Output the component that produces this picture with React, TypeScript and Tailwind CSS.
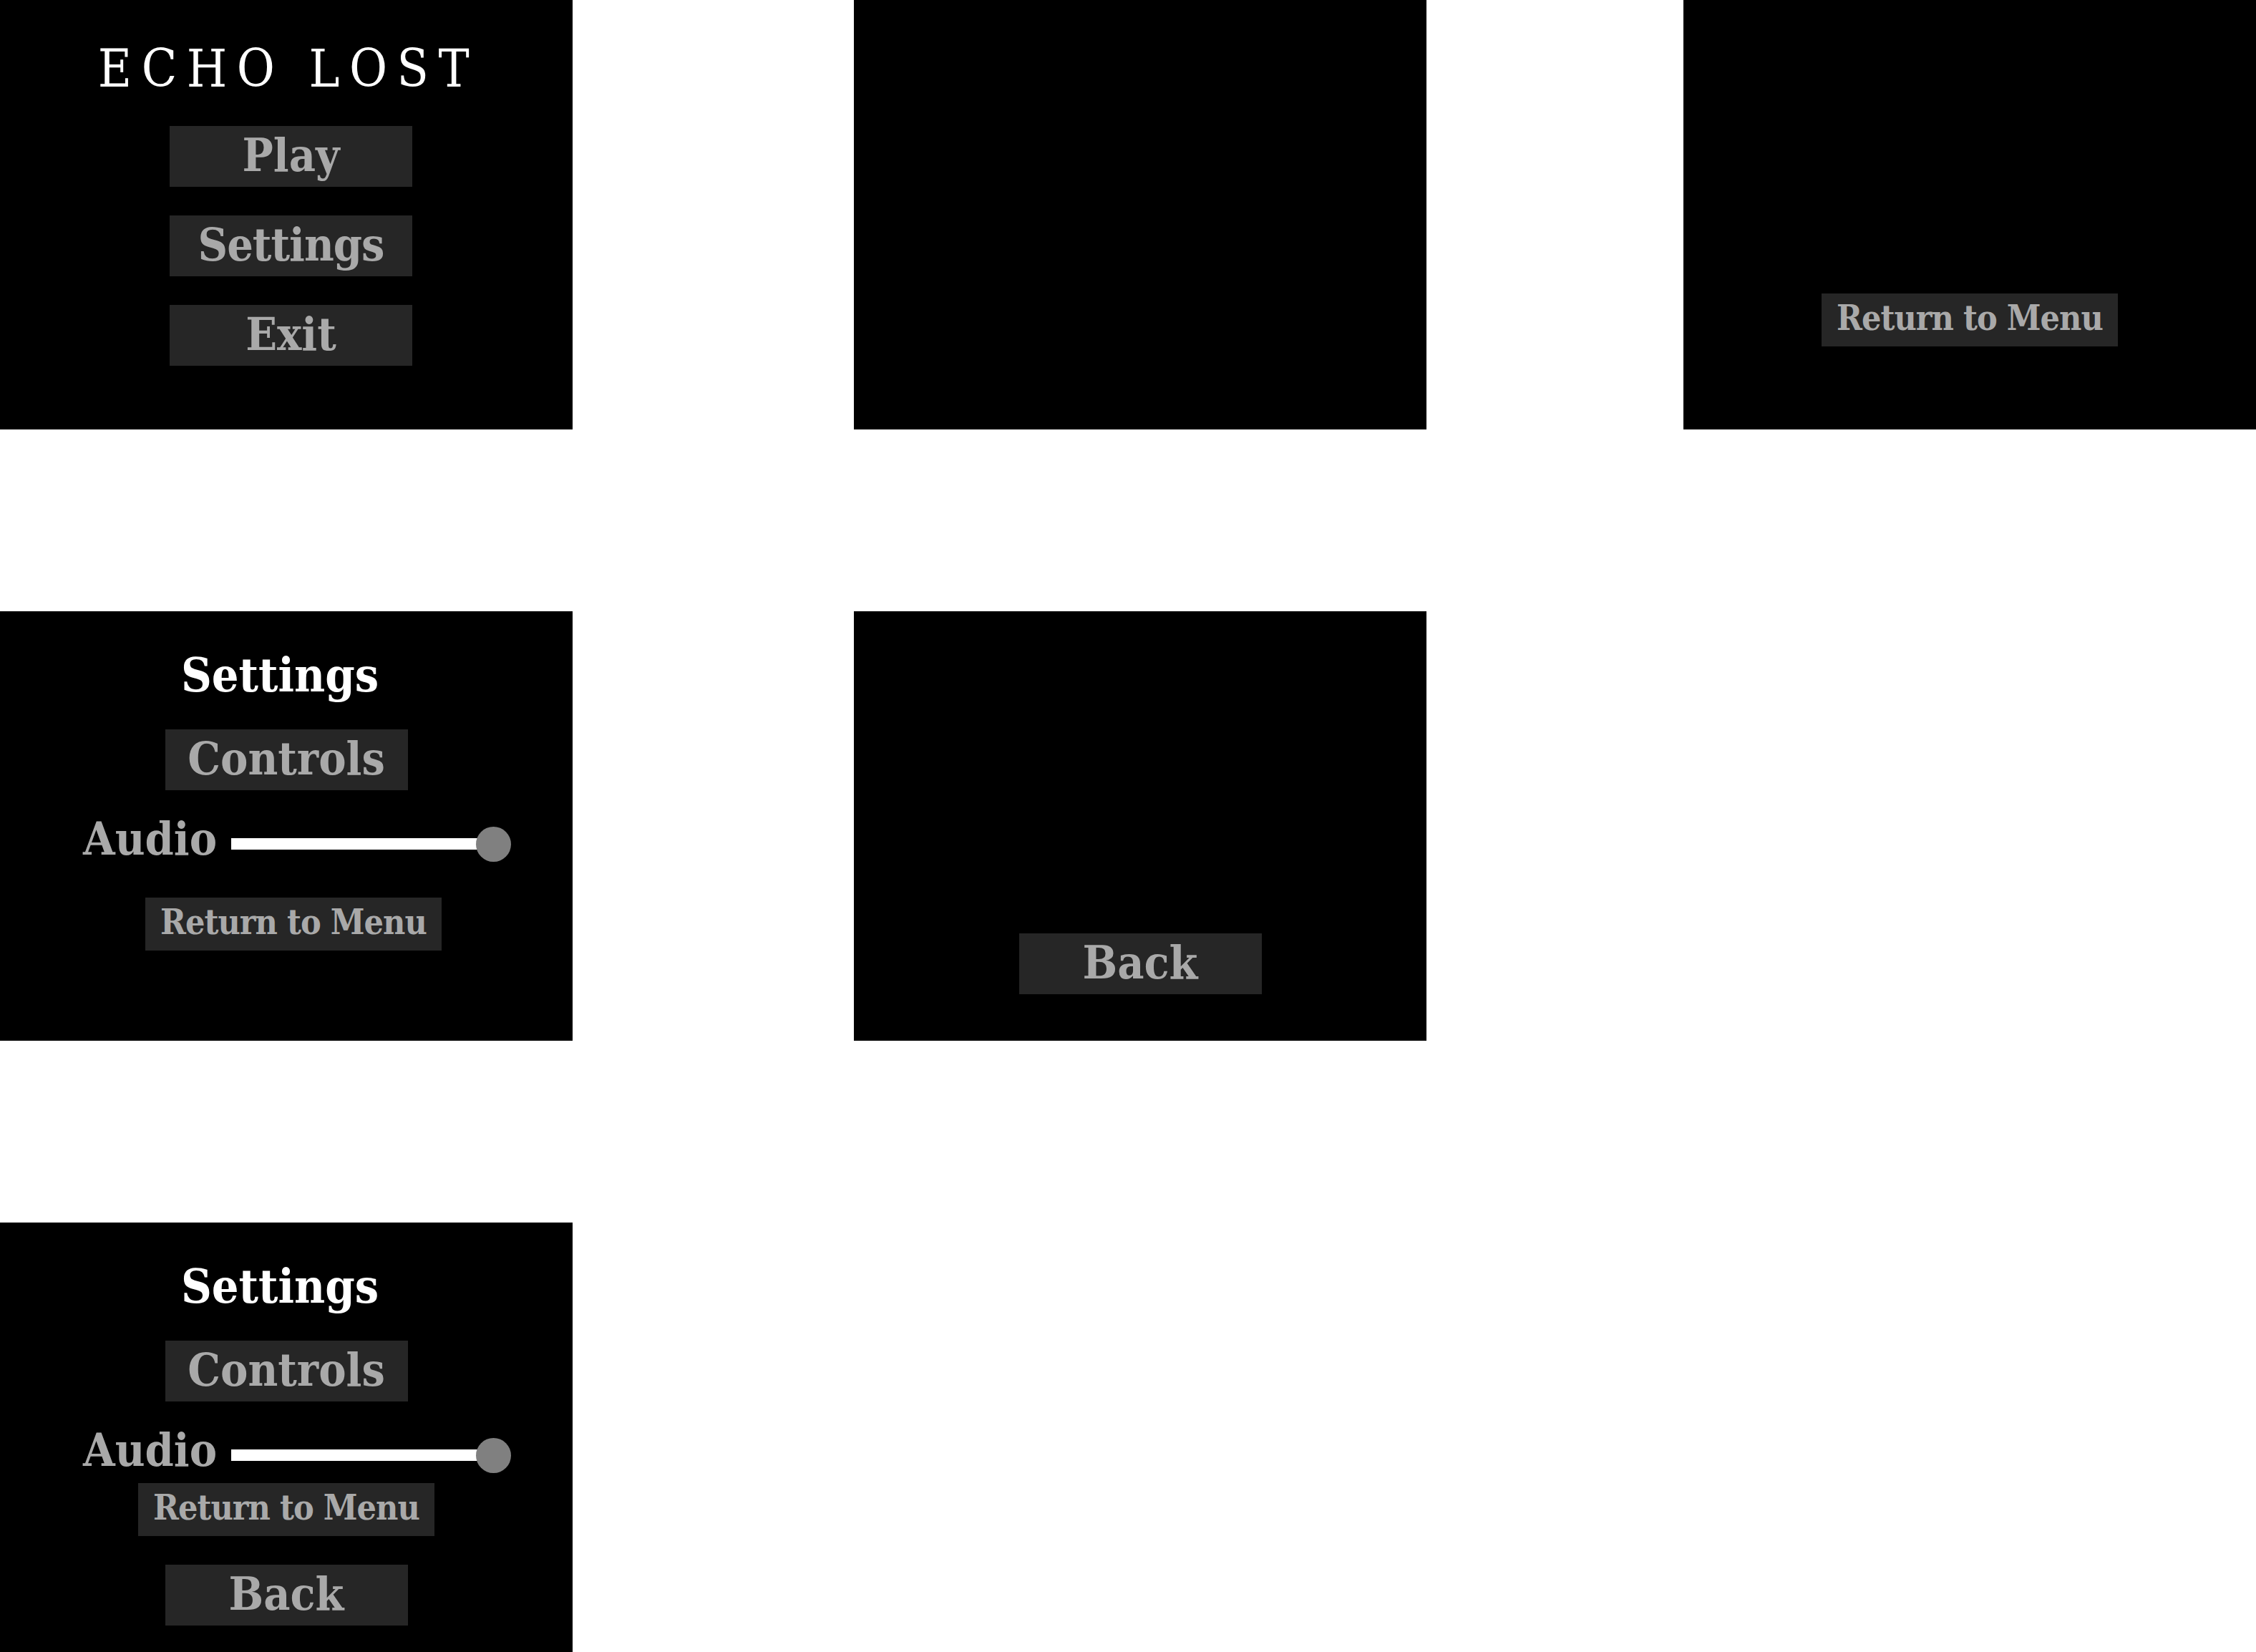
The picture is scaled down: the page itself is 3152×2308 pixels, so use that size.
import React from 'react';

const font = "font-['DejaVu_Serif_Condensed','DejaVu_Serif',serif]";

function Btn({ label, className = '' }: { label: string; className?: string }) {
  return (
    <div
      className={`h-[85px] w-[339px] bg-[#262626] text-center text-[64px] leading-[82px] font-bold text-[#a9a9a9] ${className}`}
    >
      {label}
    </div>
  );
}

function SmallBtn({ label, className = '' }: { label: string; className?: string }) {
  return (
    <div
      className={`h-[74px] w-[414px] bg-[#262626] text-center text-[48px] leading-[68px] font-bold tracking-[-1px] text-[#a9a9a9] ${className}`}
    >
      {label}
    </div>
  );
}

function AudioRow() {
  return (
    <div className="self-start ml-[116px] flex items-center gap-[26px]">
      <span className="w-[181px] mb-[14px] text-[64px] leading-none font-bold text-[#a9a9a9]">Audio</span>
      <div className="relative w-[391px] h-[49px] flex items-center">
        <div className="h-[16px] w-[366px] bg-white" />
        {/* knob sits on the right end of the track */}
        <div className="absolute right-0 top-0 h-[49px] w-[49px] rounded-full bg-[#808080]" />
      </div>
    </div>
  );
}

function Panel({ children, className = '' }: { children?: React.ReactNode; className?: string }) {
  return (
    <div className={`h-[600px] w-[800px] shrink-0 bg-black flex flex-col items-center ${className}`}>{children}</div>
  );
}

export default function App() {
  return (
    <div className={`w-[3152px] bg-white flex flex-col gap-[254px] ${font}`}>
      <div className="flex">
        <Panel className="pt-[60px]">
          <h1 className="ml-[6px] text-[72px] leading-none tracking-[13.5px] text-white">ECHO LOST</h1>
          <Btn label="Play" className="mt-[44px] ml-[13px]" />
          <Btn label="Settings" className="mt-[40px] ml-[13px] tracking-[-1px]" />
          <Btn label="Exit" className="mt-[40px] ml-[13px]" />
        </Panel>
        <Panel className="ml-[393px]" />
        <Panel className="ml-[359px] pt-[410px]">
          <SmallBtn label="Return to Menu" />
        </Panel>
      </div>

      <div className="flex">
        <Panel className="pt-[56px]">
          <h2 className="mr-[18px] text-[66px] leading-none font-bold text-white">Settings</h2>
          <Btn label="Controls" className="mt-[43px]" />
          <div className="mt-[36px] self-stretch flex flex-col">
            <AudioRow />
          </div>
          <SmallBtn label="Return to Menu" className="mt-[36px] ml-[20px]" />
        </Panel>
        <Panel className="ml-[393px] pt-[450px]">
          <Btn label="Back" />
        </Panel>
      </div>

      <div className="flex">
        <Panel className="pt-[56px]">
          <h2 className="mr-[18px] text-[66px] leading-none font-bold text-white">Settings</h2>
          <Btn label="Controls" className="mt-[43px]" />
          <div className="mt-[36px] self-stretch flex flex-col">
            <AudioRow />
          </div>
          <SmallBtn label="Return to Menu" />
          <Btn label="Back" className="mt-[40px]" />
        </Panel>
      </div>
    </div>
  );
}
